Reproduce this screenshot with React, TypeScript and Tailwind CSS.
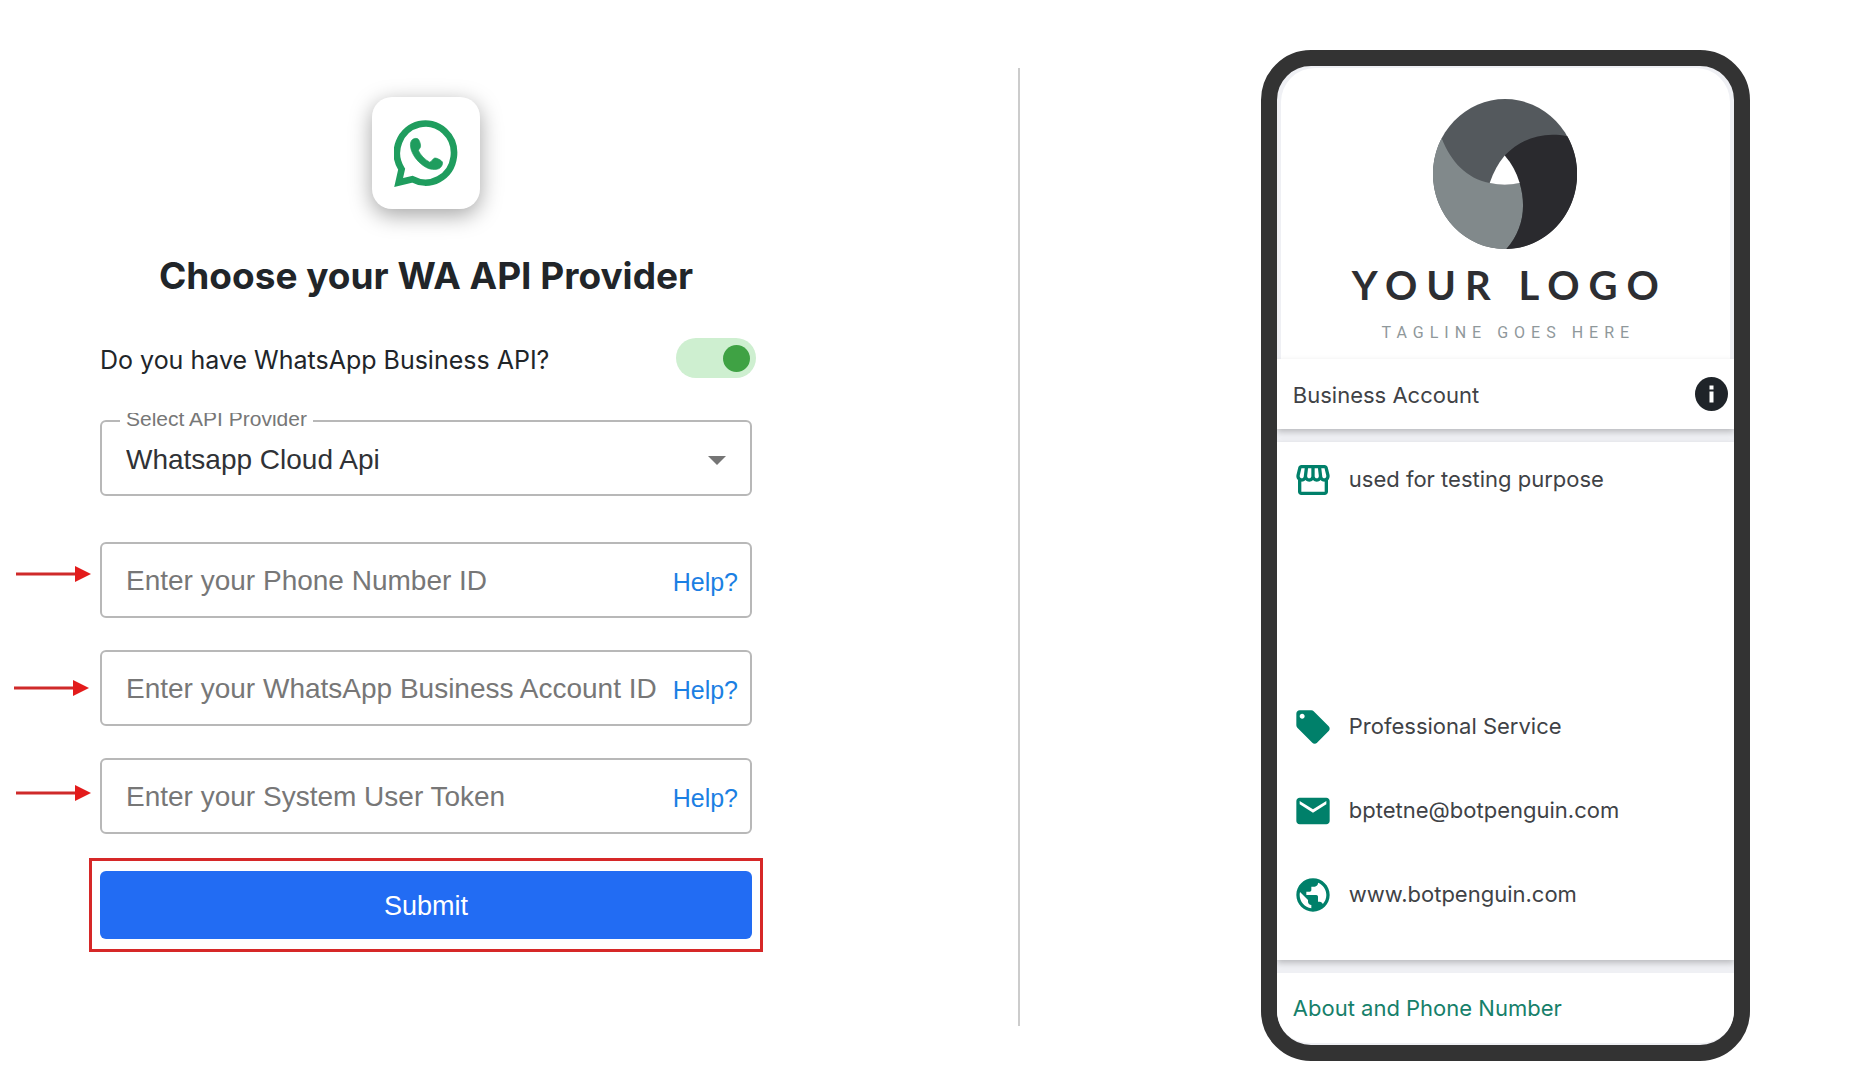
import { useState } from "react";
import type { ReactNode } from "react";
import { MdEmail, MdLocalOffer, MdPublic, MdStorefront } from "react-icons/md";

function WhatsAppIcon() {
  return (
    <svg viewBox="160 116 196 204" className="mt-0.5 h-[68px] w-[65px]" aria-hidden="true">
      <path
        d="M183 264 A86 89 0 1 1 215 294 L174 304 Z"
        fill="none"
        stroke="#1f9d5e"
        strokeWidth="20"
        strokeMiterlimit="6"
      />
      <path
        d="M213 177 C219 170 230 169 234 174 C238 180 241 190 240 196 C239 201 234 204 234 208 C240 221 252 234 268 243 C273 241 277 232 283 230 C290 230 302 236 306 242 C308 249 303 258 296 262 C285 267 268 265 256 258 C235 246 219 227 212 206 C209 195 208 184 213 177 Z"
        fill="#1f9d5e"
        stroke="#1f9d5e"
        strokeWidth="2"
      />
    </svg>
  );
}

function BrandMark() {
  return (
    <svg viewBox="42 26 432 448" preserveAspectRatio="none" className="h-[150px] w-36" aria-hidden="true">
      <ellipse cx="258" cy="250" rx="216" ry="224" fill="#54595d" />
      <path
        d="M68 143 C97 215 142 262 212 277 Q257 287 302 277 C324 350 310 420 262 474 A216 224 0 0 1 68 143 Z"
        fill="#81898b"
      />
      <path
        d="M445 137 C370 122 305 145 257 195 Q288 230 302 277 C324 350 310 420 262 474 A216 224 0 0 0 445 137 Z"
        fill="#2a2a2e"
      />
      <path d="M257 195 Q288 230 302 277 Q257 287 212 277 Q228 230 257 195 Z" fill="#ffffff" />
    </svg>
  );
}

function Arrow({ className }: { className: string }) {
  return (
    <svg viewBox="0 0 75 16" className={`absolute h-4 w-[75px] ${className}`} aria-hidden="true">
      <path d="M0 8H60" stroke="#cf2a2a" strokeWidth="3" />
      <path d="M59 0L75 8L59 16Z" fill="#e31b1b" />
    </svg>
  );
}

function Field({ id, label, arrow }: { id: string; label: string; arrow: string }) {
  return (
    <div className="relative flex h-[76px] items-center rounded-md border-2 border-[#b8b8b8] pr-3 pl-6">
      <Arrow className={arrow} />
      <input
        id={id}
        type="text"
        aria-label={label}
        placeholder={label}
        className="min-w-0 flex-1 bg-transparent pt-0.5 font-['Liberation_Sans',sans-serif] text-[28px] text-[#333] outline-none placeholder:text-[#777]"
      />
      <a href="#help" className="pt-1.5 font-['Liberation_Sans',sans-serif] text-[25px] text-[#1b7fe3]">
        Help?
      </a>
    </div>
  );
}

function InfoRow({ icon, children }: { icon: ReactNode; children: ReactNode }) {
  return (
    <div className="flex h-10 items-center gap-4 pl-4 text-[#00806a]">
      {icon}
      <span className="pb-0.5 text-[22px] text-[#404246]">{children}</span>
    </div>
  );
}

export default function App() {
  const [hasApi, setHasApi] = useState(true);
  return (
    <main className="grid min-h-screen grid-cols-[6fr_5fr] bg-white font-[Inter,sans-serif] text-[#212529]">
      <section className="flex">
        <form className="ml-[100px] flex max-w-[652px] flex-1 flex-col pt-[97px]" onSubmit={(e) => e.preventDefault()}>
          <div className="flex h-28 w-[108px] items-center justify-center self-center rounded-[20px] bg-white shadow-[0_6px_22px_rgba(0,0,0,0.36)]">
            <WhatsAppIcon />
          </div>
          <h1 className="mt-[43px] text-center text-[37px] leading-12 font-bold whitespace-nowrap">
            Choose your WA API Provider
          </h1>
          <div className="mt-[38px] -mr-1 flex h-10 items-center justify-between">
            <label htmlFor="has-api" className="pt-1.5 text-[25px] whitespace-nowrap">
              Do you have WhatsApp Business API?
            </label>
            <span className="relative flex h-10 w-20">
              <input
                id="has-api"
                type="checkbox"
                role="switch"
                checked={hasApi}
                onChange={(e) => setHasApi(e.target.checked)}
                className="peer h-10 w-20 cursor-pointer appearance-none rounded-full bg-gray-300 checked:bg-[#ceefd0]"
              />
              <span className="pointer-events-none absolute top-[7px] left-[7px] h-[27px] w-[27px] rounded-full bg-gray-500 peer-checked:left-[47px] peer-checked:bg-[#3fa244]" />
            </span>
          </div>

          <div className="relative mt-[42px] h-[76px] rounded-md border-2 border-[#b8b8b8]">
            <label
              htmlFor="provider"
              className="absolute -top-[9px] left-[18px] h-4 overflow-hidden bg-white px-1.5 font-['Liberation_Sans',sans-serif] text-[21px] leading-3 whitespace-nowrap text-[#777]"
            >
              Select API Provider
            </label>
            <select
              id="provider"
              className="h-full w-full appearance-none bg-transparent pt-1 pr-12 pl-6 font-['Liberation_Sans',sans-serif] text-[28px] text-[#303236] outline-none"
            >
              <option>Whatsapp Cloud Api</option>
            </select>
            <svg
              viewBox="0 0 18 9"
              className="pointer-events-none absolute top-[34px] right-6 h-[9px] w-[18px]"
              aria-hidden="true"
            >
              <path d="M0 0H18L9 9Z" fill="#757575" />
            </svg>
          </div>

          <div className="mt-[46px] flex flex-col gap-8">
            <Field id="phone-id" label="Enter your Phone Number ID" arrow="top-[22px] -left-[86px]" />
            <Field id="account-id" label="Enter your WhatsApp Business Account ID" arrow="top-[28px] -left-[88px]" />
            <Field id="token" label="Enter your System User Token" arrow="top-[25px] -left-[86px]" />
          </div>

          <div className="-mx-[11px] mt-6 border-3 border-[#d62828] px-2 py-2.5">
            <button
              type="submit"
              className="h-[68px] w-full rounded-md bg-[#226cf3] pt-0.5 font-['Liberation_Sans',sans-serif] text-[27px] text-white"
            >
              Submit
            </button>
          </div>
        </form>
      </section>

      <section className="flex">
        <div className="mt-17 mb-[54px] w-0.5 bg-[#cccccc]" />
        <div className="flex flex-1 items-start pt-[50px] pr-[116px] pl-[241px]">
          <div className="w-full max-w-[489px] overflow-hidden rounded-[50px] border-16 border-[#333333] bg-[#eff0f4]">
            <div className="mx-1 mt-0.5 flex flex-col items-center rounded-t-[34px] bg-white pt-[31px] pb-[14px]">
              <BrandMark />
              <div className="mt-3 -mr-[9px] font-[Lato,sans-serif] text-[40px] leading-12 font-bold tracking-[9px] whitespace-nowrap text-[#2d2e32]">
                YOUR LOGO
              </div>
              <div className="mt-3 -mr-1.5 font-[Roboto,sans-serif] text-[16px] leading-6 tracking-[6px] whitespace-nowrap text-[#8f989b]">
                TAGLINE GOES HERE
              </div>
            </div>

            <div className="relative flex h-[70px] items-center justify-between bg-white pr-1.5 pl-4 shadow-[0_3px_6px_rgba(0,0,0,0.22)]">
              <span className="pt-0.5 text-[22px] text-[#404246]">Business Account</span>
              <button
                type="button"
                aria-label="Business account information"
                className="flex h-[34px] w-[33px] items-center justify-center"
              >
                <svg viewBox="0 0 33 34" className="h-[34px] w-[33px]" aria-hidden="true">
                  <ellipse cx="16.5" cy="17" rx="16.5" ry="17" fill="#1f2429" />
                  <path d="M14.5 8.5h4v4h-4zM14.5 14.5h4v11h-4z" fill="#ffffff" />
                </svg>
              </button>
            </div>

            <div className="relative mt-[13px] h-[518px] bg-white pt-[18px] shadow-[0_3px_6px_rgba(0,0,0,0.22)]">
              <InfoRow icon={<MdStorefront size={40} />}>used for testing purpose</InfoRow>
              <div className="mt-[207px] flex flex-col gap-11">
                <InfoRow icon={<MdLocalOffer size={40} />}>Professional Service</InfoRow>
                <InfoRow icon={<MdEmail size={40} />}>bptetne@botpenguin.com</InfoRow>
                <InfoRow icon={<MdPublic size={40} />}>www.botpenguin.com</InfoRow>
              </div>
            </div>

            <div className="mt-[13px] mb-0.5 flex h-[70px] items-center rounded-b-[32px] bg-white pl-4">
              <a href="#about" className="text-[22px] text-[#16806a]">
                About and Phone Number
              </a>
            </div>
          </div>
        </div>
      </section>
    </main>
  );
}
